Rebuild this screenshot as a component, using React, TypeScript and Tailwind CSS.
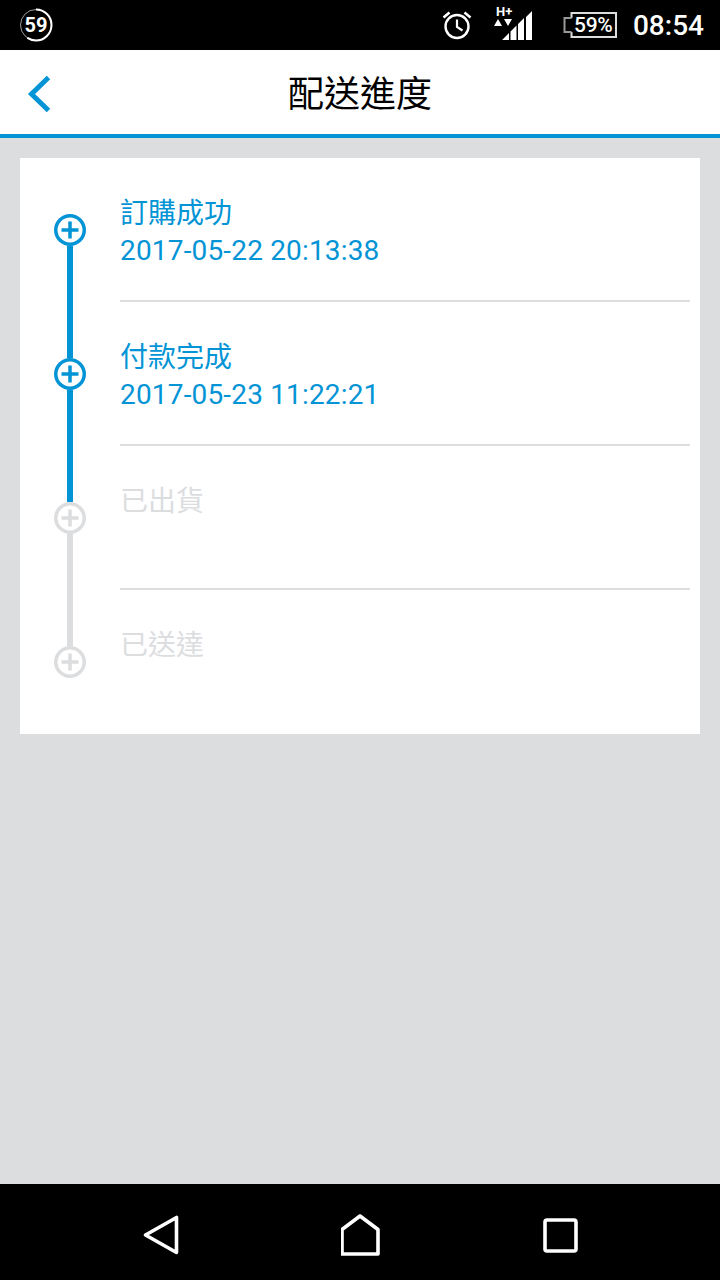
import React from 'react'

const FONT = "font-['Roboto','Noto_Sans_CJK_TC',sans-serif]"

type Step = {
  title: string
  time?: string
  done: boolean
  top?: 'blue' | 'gray'
  bottom?: 'blue' | 'gray'
}

const steps: Step[] = [
  { title: '訂購成功', time: '2017-05-22 20:13:38', done: true, bottom: 'blue' },
  { title: '付款完成', time: '2017-05-23 11:22:21', done: true, top: 'blue', bottom: 'blue' },
  { title: '已出貨', done: false, top: 'blue', bottom: 'gray' },
  { title: '已送達', done: false, top: 'gray' },
]

function Rail({ color }: { color?: 'blue' | 'gray' }) {
  if (!color) return <div className="flex-1" />
  return <div className={`flex-1 w-[6px] ${color === 'blue' ? 'bg-[#0394d6]' : 'bg-[#dcdddf]'}`} />
}

function PlusDot({ done }: { done: boolean }) {
  const c = done ? '#0394d6' : '#dcdddf'
  return (
    <svg width="32" height="32" viewBox="0 0 32 32" className="shrink-0 block">
      <circle cx="16" cy="16" r="14.25" fill="none" stroke={c} strokeWidth="3.5" />
      <path d="M16 7.5v17M7.500 16h17" fill="none" stroke={c} strokeWidth="3.5" />
    </svg>
  )
}

function StatusBar() {
  return (
    <div className="h-[50px] bg-black flex items-center text-white relative shrink-0">
      {/* battery saver ring */}
      <div className="ml-[19px] relative w-[34px] h-[34px] flex items-center justify-center">
        <svg width="34" height="34" viewBox="0 0 34 34" className="absolute inset-0">
          <circle cx="17" cy="17" r="15.5" fill="none" stroke="#999" strokeWidth="1" />
          <circle cx="17" cy="17" r="15.5" fill="none" stroke="#fff" strokeWidth="2" strokeDasharray="57.5 97.4" transform="rotate(-90 17 17)" />
        </svg>
        <span className="relative font-['Roboto',sans-serif] font-bold text-[20px] leading-none">59</span>
      </div>
      <div className="flex-1" />
      {/* alarm */}
      <svg width="30" height="30" viewBox="0 0 30 30" className="mr-[22px]">
        <circle cx="15" cy="16.5" r="11.5" fill="none" stroke="#fff" strokeWidth="2.4" />
        <path d="M15 9.500V17l5.500 3.500" fill="none" stroke="#fff" strokeWidth="2.2" />
        <path d="M1.500 7.500 7.500 2.500M28.500 7.500 22.500 2.500" fill="none" stroke="#fff" strokeWidth="2.6" />
      </svg>
      {/* signal with H+ */}
      <div className="relative w-[38px] h-[36px] mt-[-4px] mr-[31px]">
        <span className="absolute left-[2px] top-[0px] font-['Roboto',sans-serif] font-bold text-[13px] leading-[13px]">H+</span>
        <svg width="38" height="36" viewBox="0 0 38 36" className="absolute inset-0">
          <path d="M0 21 4 14l4 7zM10 14h8l-4 7z" fill="#fff" />
          <path d="M8 35l7-7v7zM16.500 35V26.500l6-6V35zM24 35V19l6-6v22zM32 35V12l6-6v29z" fill="#fff" />
        </svg>
      </div>
      {/* battery */}
      <svg width="54" height="26" viewBox="0 0 54 26" className="mr-[16px]">
        <path d="M8.500 6V1H53V25H8.500V20" fill="none" stroke="#ddd" strokeWidth="2" />
        <path d="M8.500 6H1.500V20H8.500" fill="none" stroke="#999" strokeWidth="2" />
      </svg>
      <span className="absolute left-[574px] top-[14px] font-['Roboto',sans-serif] font-medium text-[21px] leading-[22px] tracking-[-0.3px]">59%</span>
      <span className="font-['Roboto',sans-serif] font-medium text-[28px] leading-none mr-[16px] mt-[2px]">08:54</span>
    </div>
  )
}

function NavBar() {
  return (
    <div className="h-[88px] bg-white border-b-4 border-[#0394d6] flex items-center justify-center relative shrink-0">
      <svg width="26" height="38" viewBox="0 0 26 38" className="absolute left-[26px] top-[25px]">
        <path d="M22.500 2.500 5.500 19l17 16.500" fill="none" stroke="#0394d6" strokeWidth="5" />
      </svg>
      <h1 className="text-[36px] leading-none text-black mt-[6px]">配送進度</h1>
    </div>
  )
}

function BottomBar() {
  return (
    <div className="h-[96px] bg-black flex items-center justify-between pl-[143px] pr-[142px] pt-[6px] shrink-0">
      <svg width="36" height="40" viewBox="0 0 36 40">
        <path d="M2.500 20 33.500 2.500v35z" fill="none" stroke="#fff" strokeWidth="3.6" strokeLinejoin="round" />
      </svg>
      <svg width="40" height="42" viewBox="0 0 40 42">
        <path d="M1 40V15.500L19 2l18 13.500V40z" fill="none" stroke="#fff" strokeWidth="3.6" strokeLinejoin="round" />
      </svg>
      <svg width="35" height="35" viewBox="0 0 35 35">
        <rect x="2" y="2" width="31" height="31" rx="2" fill="none" stroke="#fff" strokeWidth="3.6" />
      </svg>
    </div>
  )
}

export default function App() {
  return (
    <div className={`w-[720px] h-[1280px] flex flex-col bg-[#dcdddf] overflow-hidden ${FONT}`}>
      <StatusBar />
      <NavBar />
      <div className="flex-1 pt-[20px] px-[20px]">
        <div className="bg-white">
          {steps.map((s, i) => (
            <div key={s.title} className="flex h-[144px]">
              <div className="w-[100px] flex flex-col items-center">
                <Rail color={s.top} />
                <PlusDot done={s.done} />
                <Rail color={s.bottom} />
              </div>
              <div className={`flex-1 mr-[10px] pt-[38px] ${i < steps.length - 1 ? 'border-b-2 border-[#dcdddf]' : ''}`}>
                <div className={`text-[28px] leading-[36px] ${s.done ? 'text-[#0394d6]' : 'text-[#dcdddf]'}`}>{s.title}</div>
                {s.time && <div className="text-[28px] leading-[38px] tracking-[0.17px] text-[#0394d6]">{s.time}</div>}
              </div>
            </div>
          ))}
        </div>
      </div>
      <BottomBar />
    </div>
  )
}
